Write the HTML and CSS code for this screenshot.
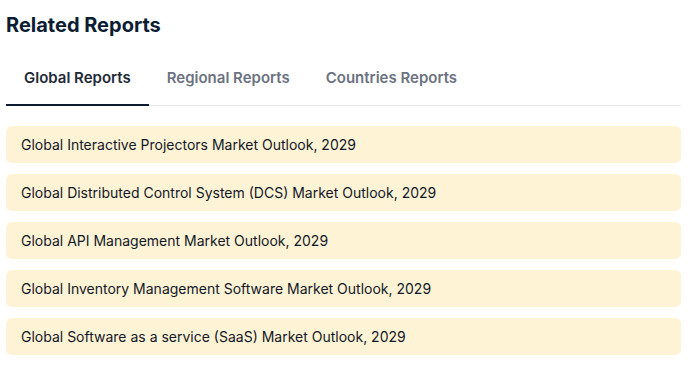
FILE: index.html
```html
<!DOCTYPE html>
<html lang="en">
  <head>
    <meta charset="UTF-8" />
    <meta name="viewport" content="width=device-width, initial-scale=1.0" />
    <title>Related Reports</title>
    <link rel="stylesheet" href="styles.css">
  </head>
  <body>
    <section class="related">
      <h2 class="title">Related Reports</h2>
      <div class="tabs">
        <button class="tab active">Global Reports</button>
        <button class="tab">Regional Reports</button>
        <button class="tab">Countries Reports</button>
      </div>
      <ul class="list">
        <li class="item">Global Interactive Projectors Market Outlook, 2029</li>
        <li class="item">Global Distributed Control System (DCS) Market Outlook, 2029</li>
        <li class="item">Global API Management Market Outlook, 2029</li>
        <li class="item">Global Inventory Management Software Market Outlook, 2029</li>
        <li class="item">Global Software as a service (SaaS) Market Outlook, 2029</li>
      </ul>
    </section>
  </body>
</html>
```

FILE: styles.css
```css
body {
  margin: 0;
  font-family: Inter, "Liberation Sans", sans-serif;
  background: #fff;
}
.related {
  width: 675px;
  padding: 12px 0 0 6px;
}
.title {
  margin: 0;
  font-size: 20px;
  line-height: 26px;
  font-weight: 700;
  color: #0b1c33;
}
.tabs {
  display: flex;
  margin-top: 30px;
  border-bottom: 1px solid #e5e7eb;
}
.tab {
  font-family: inherit;
  font-size: 15px;
  font-weight: 600;
  color: #6b7280;
  background: none;
  border: none;
  padding: 0 18px 16px;
  margin-bottom: -1px;
  border-bottom: 2px solid transparent;
  line-height: 20px;
  cursor: pointer;
}
.tab.active {
  color: #1f2937;
  border-bottom-color: #0b1c33;
}
.list {
  list-style: none;
  margin: 20px 0 0;
  padding: 0;
  display: flex;
  flex-direction: column;
  gap: 11px;
}
.item {
  background: #fff3d6;
  border-radius: 6px;
  padding: 0 15px;
  height: 37px;
  display: flex;
  align-items: center;
  font-size: 14px;
  color: #111827;
}
```
